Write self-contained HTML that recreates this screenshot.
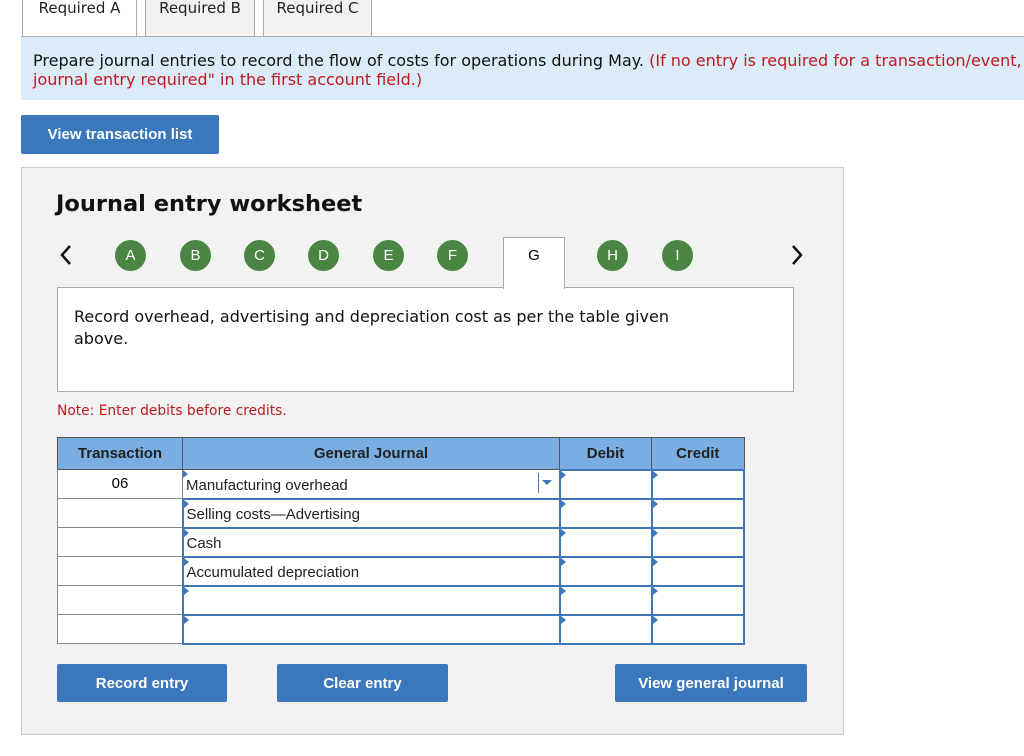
<!DOCTYPE html>
<html><head><style>
*{box-sizing:border-box;margin:0;padding:0}
body{width:1024px;height:756px;background:#fff;font-family:"DejaVu Sans","Liberation Sans",sans-serif;position:relative;overflow:hidden}
.a{position:absolute}
.tab{position:absolute;top:-2px;height:38px;border:1px solid #aaa;border-bottom:none;background:#f2f2f2;font-size:15px;color:#222;text-align:center;line-height:18px}
.btn{position:absolute;background:#3a77bb;color:#fff;font-family:"Liberation Sans",sans-serif;font-weight:bold;font-size:15px;text-align:center;border-radius:2px}
.c{position:absolute;width:31px;height:31px;border-radius:50%;background:#4a8543;color:#fff;font-family:"Liberation Sans",sans-serif;font-size:15px;text-align:center;line-height:31px;top:240px}
table{border-collapse:collapse;font-family:"Liberation Sans",sans-serif;font-size:15px}
td,th{height:29px;padding:0}
th{background:#7aaee3;border:1px solid #555;font-weight:bold;color:#222;height:32px}
td.t{background:#fff;border:1px solid #888;text-align:center;vertical-align:top;padding-top:5px}
td.i{background:#fff;border:2px solid #3f78b8;position:relative;vertical-align:bottom;padding:0 0 4px 3px;color:#222}
td.i:before{content:"";position:absolute;left:0;top:0;border-left:5px solid #3f78b8;border-top:4px solid transparent;border-bottom:4px solid transparent}
</style></head><body>
<div class="tab" style="left:22px;width:115px;background:#fff;height:39px">Required A</div>
<div class="tab" style="left:145px;width:110px">Required B</div>
<div class="tab" style="left:263px;width:109px">Required C</div>
<div class="a" style="left:21px;top:36px;width:1003px;height:1px;background:#aaa"></div>
<div class="a" style="left:21px;top:37px;width:1003px;height:63px;overflow:hidden;background:#dbebf8;padding:14px 0 0 12px;font-size:16px;line-height:19px;color:#111;white-space:nowrap">Prepare journal entries to record the flow of costs for operations during May. <span style="color:#c0191f">(If no entry is required for a transaction/event, select "No<br>journal entry required" in the first account field.)</span></div>
<div class="btn" style="left:21px;top:115px;width:198px;height:39px;line-height:40px">View transaction list</div>
<div class="a" style="left:21px;top:167px;width:823px;height:568px;background:#f2f2f2;border:1px solid #ccc"></div>
<div class="a" style="left:56px;top:191px;font-size:22.5px;font-weight:bold;color:#111">Journal entry worksheet</div>
<svg class="a" style="left:59px;top:244px" width="16" height="22"><path d="M11 2 L3 11 L11 20" stroke="#111" stroke-width="2.5" fill="none"/></svg>
<svg class="a" style="left:789px;top:244px" width="16" height="22"><path d="M4 2 L12 11 L4 20" stroke="#111" stroke-width="2.5" fill="none"/></svg>
<div class="c" style="left:115px">A</div><div class="c" style="left:180px">B</div><div class="c" style="left:244px">C</div><div class="c" style="left:308px">D</div><div class="c" style="left:373px">E</div><div class="c" style="left:437px">F</div>
<div class="a" style="left:503px;top:237px;width:62px;height:52px;background:#fff;border:1px solid #aaa;border-bottom:none;font-family:'Liberation Sans',sans-serif;font-size:15px;text-align:center;line-height:36px;z-index:2">G</div>
<div class="c" style="left:597px">H</div><div class="c" style="left:662px">I</div>
<div class="a" style="left:57px;top:287px;width:737px;height:105px;background:#fff;border:1px solid #aaa;padding:18px 16px;font-size:16px;line-height:22px;color:#111">Record overhead, advertising and depreciation cost as per the table given<br>above.</div>
<div class="a" style="left:57px;top:403px;font-size:13.8px;color:#c0191f">Note: Enter debits before credits.</div>
<table class="a" style="left:57px;top:437px;width:688px">
<tr><th style="width:125px">Transaction</th><th style="width:377px">General Journal</th><th style="width:92px">Debit</th><th>Credit</th></tr>
<tr><td class="t">06</td><td class="i" style="border:1px dotted #3f78b8">Manufacturing overhead<span style="position:absolute;right:20px;top:3px;width:1px;height:20px;background:#3f78b8"></span><span style="position:absolute;right:7px;top:10px;border-top:5px solid #3f78b8;border-left:5px solid transparent;border-right:5px solid transparent"></span></td><td class="i"></td><td class="i"></td></tr>
<tr><td class="t"></td><td class="i">Selling costs—Advertising</td><td class="i"></td><td class="i"></td></tr>
<tr><td class="t"></td><td class="i">Cash</td><td class="i"></td><td class="i"></td></tr>
<tr><td class="t"></td><td class="i">Accumulated depreciation</td><td class="i"></td><td class="i"></td></tr>
<tr><td class="t"></td><td class="i"></td><td class="i"></td><td class="i"></td></tr>
<tr><td class="t"></td><td class="i"></td><td class="i"></td><td class="i"></td></tr>
</table>
<div class="btn" style="left:57px;top:664px;width:170px;height:38px;line-height:40px">Record entry</div>
<div class="btn" style="left:277px;top:664px;width:171px;height:38px;line-height:40px">Clear entry</div>
<div class="btn" style="left:615px;top:664px;width:192px;height:38px;line-height:40px">View general journal</div>
</body></html>
